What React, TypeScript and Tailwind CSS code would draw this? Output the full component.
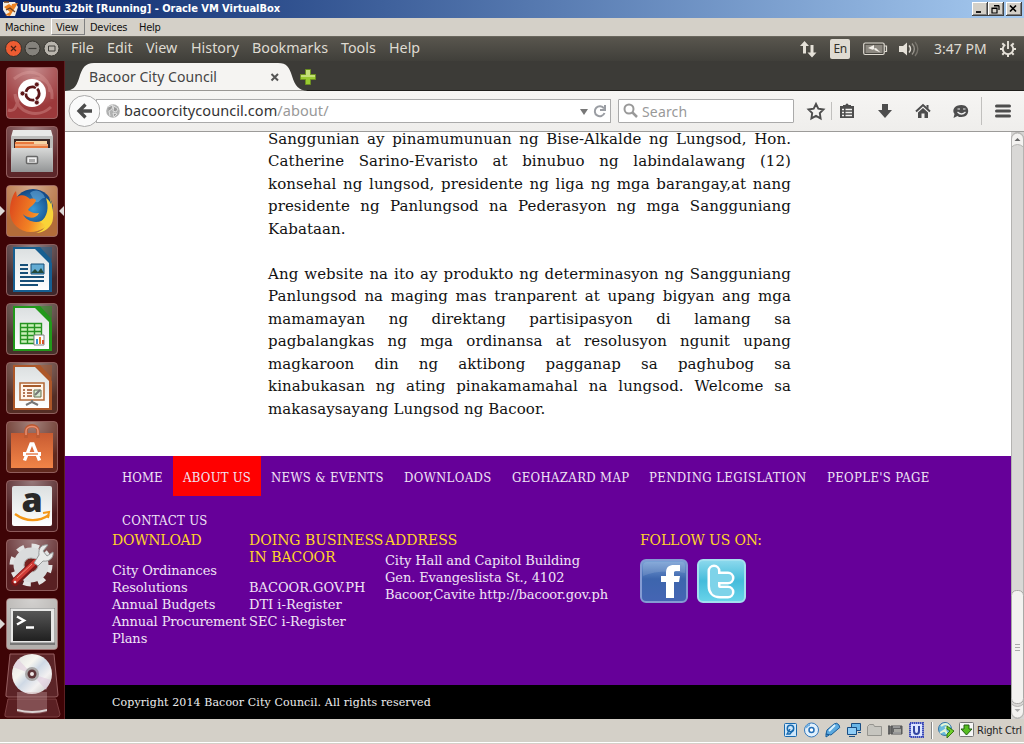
import React from 'react';

const ubuntu = "font-['Noto_Sans','Open_Sans',sans-serif]";
const tahoma = "font-['DejaVu_Sans_Condensed','DejaVu_Sans',sans-serif]";
const serif = "font-['DejaVu_Serif',serif]";

function TitleBar() {
  return (
    <div className={`flex h-[18px] items-center bg-linear-to-r from-[#0a246a] to-[#a6caf0] pl-[2px] pr-[2px] ${tahoma}`}>
      <svg width="17" height="16" viewBox="0 0 17 16">
        <path d="M1 1h12l3 5-3 9H5L1 9z" fill="#f4ede2" />
        <path d="M2 6l5-3 4 3-3 5zM10 3l6-1-5 8-3 5-5-1 5-3z" fill="#ec8122" />
        <path d="M2 1h5M4 9l4-2 5 4" stroke="#74411f" strokeWidth="1.3" fill="none" />
      </svg>
      <span className="ml-[1px] whitespace-nowrap text-[11px] font-bold tracking-[-.04px] text-white">Ubuntu 32bit [Running] - Oracle VM VirtualBox</span>
      <div className="ml-auto flex">
        {['M4 10h5', 'M6 4h5v4M4 6h5v5H4zM6 3.5h5M4 6.5h5', 'M4 3.500l6 6M10 3.500l-6 6'].map((d, i) => (
          <svg key={d} className={i === 2 ? 'ml-[2px]' : ''} width="16" height="14" viewBox="0 0 16 14">
            <path d="M0 0h16v14H0z" fill="#404040" />
            <path d="M0 0h15v13H0z" fill="#fff" />
            <path d="M1 1h14v12H1z" fill="#808080" />
            <path d="M1 1h13v11H1z" fill="#d4d0c8" />
            <path d={d} fill="none" stroke="#000" strokeWidth={i === 1 ? 1.2 : 1.7} />
          </svg>
        ))}
      </div>
    </div>
  );
}

function MachineMenu() {
  return (
    <div className={`flex h-[18px] bg-[#d4d0c8] text-[11px] leading-[20px] tracking-[-.25px] text-[#111] ${tahoma}`}>
      <span className="w-[51px] pl-[5px]">Machine</span>
      <span className="h-[17px] w-[34px] border border-[#808080] border-l-white border-t-white pl-[4px] leading-[18px]">View</span>
      <span className="w-[54px] pl-[5px]">Devices</span>
      <span>Help</span>
    </div>
  );
}

function Panel() {
  return (
    <div className={`flex h-[25px] items-center border-t border-[#69665d] bg-linear-to-b from-[#59564e] to-[#403f3a] pl-[5px] text-[14px] text-[#dfdbd2] ${ubuntu}`}>
      <svg width="56" height="18" viewBox="0 0 56 18">
        <circle cx="8.500" cy="8.500" r="8" fill="#ee5c32" stroke="#35332e" />
        <path d="M6 6l5 5M11 6l-5 5" stroke="#4a2317" strokeWidth="1.200" />
        <circle cx="27.500" cy="8.500" r="7.500" fill="#85827c" stroke="#35332e" />
        <path d="M23.500 8.500h8" stroke="#3c3b37" strokeWidth="1.200" />
        <circle cx="46.500" cy="8.500" r="7.500" fill="#b9b5ad" stroke="#35332e" />
        <path d="M43.500 6h6.500v5h-6.500z" fill="none" stroke="#3c3b37" />
      </svg>
      <div className="-mt-[2px] flex pl-[10px] text-[14.300px]">
        <span className="w-[36px]">File</span>
        <span className="w-[39px]">Edit</span>
        <span className="w-[45px]">View</span>
        <span className="w-[61px]">History</span>
        <span className="w-[89px]">Bookmarks</span>
        <span className="w-[48px]">Tools</span>
        <span>Help</span>
      </div>
      <div className="ml-auto flex items-center pr-[7px]">
        <svg width="18" height="18" viewBox="0 0 18 18" fill="#e5e1d8">
          <path d="M5.500 1L1 6h3v7.500h3V6h3zM13 17.500L8.500 12.500h3V5h3v7.500h3z" />
        </svg>
        <span className="ml-[13px] h-[20px] w-[20px] rounded-[2px] bg-[#dfdbd2] text-center text-[12px] leading-[20px] tracking-[-.5px] text-[#33312c]">En</span>
        <svg className="ml-[13px]" width="25" height="14" viewBox="0 0 25 14">
          <rect x=".7" y="1" width="20.500" height="11.500" rx="1.500" fill="none" stroke="#dfdbd2" strokeWidth="1.200" />
          <path d="M2.500 3h17v8h-17z" fill="#8d8981" />
          <path d="M21.500 4h2v5.500h-2" fill="none" stroke="#dfdbd2" strokeWidth="1.200" />
          <path d="M5 6l6-3v3.500l2-.5 4.500 4.500-6-2.500v-1l-2 .8z" fill="#f3f0e9" />
        </svg>
        <svg className="ml-[10px]" width="21" height="18" viewBox="0 0 21 18" fill="none">
          <path d="M1 6h4l4-3.500v13L5 12H1z" fill="#e5e1d8" />
          <path d="M11 5.500c2 2 2 5 0 7" stroke="#dfdbd2" strokeWidth="1.500" />
          <path d="M14 3.500c3 3.500 3 7.500 0 11" stroke="#96928a" strokeWidth="1.400" />
          <path d="M17 2c4 5 4 9 0 14" stroke="#77746c" strokeWidth="1.300" />
        </svg>
        <span className="-mt-[1px] ml-[15px] w-[53px] whitespace-nowrap">3:47 PM</span>
        <svg className="ml-[12px]" width="18" height="18" viewBox="0 0 18 18" fill="none" stroke="#e5e1d8">
          <path d="M6.300 4.600a5.200 5.200 0 1 0 5.400 0" strokeWidth="1.900" />
          <path d="M9 1v8" strokeWidth="1.900" />
          <path d="M5 5L3.300 3.300M13 5l1.700-1.700M4 9H1M14 9h3M5 13l-1.700 1.700M13 13l1.700 1.700M9 14.500V17" strokeWidth="2" />
        </svg>
      </div>
    </div>
  );
}

function LauncherArt({ name }: { name: string }) {
  switch (name) {
    case 'dash':
      return (
        <g>
          <path d="M2 43C16 48 8 18 27 12c12-3 20 7 19 20M8 12c18-15 36-2 36 13M9 27c2 20 23 25 36 13" stroke="#e3a5a4" strokeOpacity=".35" strokeWidth="3" fill="none" />
          <circle cx="26" cy="26" r="14" fill="#fff" />
          <circle cx="26.500" cy="26.500" r="6.700" fill="none" stroke="#5d1719" strokeWidth="2.800" strokeDasharray="12.500 1.530" strokeDashoffset="5.500" />
          <circle cx="30.800" cy="17.500" r="2.400" fill="#5d1719" stroke="#fff" strokeWidth=".6" /><circle cx="16.500" cy="26.500" r="2.400" fill="#5d1719" stroke="#fff" strokeWidth=".6" /><circle cx="30.800" cy="35.500" r="2.400" fill="#5d1719" stroke="#fff" strokeWidth=".6" />
        </g>
      );
    case 'files':
      return (
        <g>
          <path d="M7 4h38l2 7H5z" fill="#e9e9e7" /><path d="M5 10h42v36H5z" fill="#bdbdbb" />
          <path d="M8 13h36v10H8z" fill="#3b2927" /><path d="M10 15h31v9H10z" fill="#f6d5a4" /><path d="M9 16h19v2h14v4H9z" fill="#e9793d" /><path d="M9 19h33" stroke="#fbe4c4" />
          <path d="M6 22h40l1 24H5z" fill="url(#metal)" />
          <rect x="20.500" y="30.500" width="11" height="7" rx="1" fill="#eee" stroke="#666" strokeWidth="1.500" /><path d="M23 33h6v3h-6z" fill="#ababab" />
        </g>
      );
    case 'firefox':
      return (
        <g>
          <circle cx="27" cy="24" r="20" fill="url(#globe)" /><path d="M24 8c7-6 14 0 15 5-5-1-5 6-10 4z" fill="#73b9e8" opacity=".5" />
          <path d="M5 17c1-5 3-9 5-11l1 6c4-3 9-2 13 2 3-1 5 0 6 1-1 5-6 6-8 10 3 2 6 4 11 3-3 7-13 5-16 1 3 8 16 11 23 4 7-6 6-14 3-21 5 6 5 24-5 31C22 53 5 43 4 28c0-4 0-8 1-11z" fill="url(#fox)" />
          <path d="M34 37c8-5 9-15 6-24 6 4 8 13 7 20 0 9-10 15-17 15 6-2 9-5 9-8z" fill="#f9d438" />
        </g>
      );
    case 'writer':
    case 'calc':
    case 'impress': {
      const c = name === 'writer' ? '#175f91' : name === 'calc' ? '#22991b' : '#ad5729';
      return (
        <g>
          <path d="M7 3h23l16 16v29H7z" fill={c} /><path d="M30 3h16v16z" fill={c} opacity=".45" /><path d="M9 5h20l14 14v27H9z" fill="url(#paper)" />
          <path d="M28 3l17 17v-5L34 3z" fill={c} />
          {name === 'writer' && (
            <g><path d="M14 21h8M14 25h8M14 29h8M14 33h24M14 37h24M14 41h18" stroke="#174f78" strokeWidth="2" /><path d="M25 20h13v10H25z" fill="#63abd3" stroke="#174f78" /><path d="M25 29l4-4 3 3 3-4 3 5z" fill="#244838" /></g>
          )}
          {name === 'calc' && (
            <g><path d="M14 20h22v21H14z" fill="#c9efb7" /><path d="M14.500 20.500h21v20h-21zM21.500 20v21M28.500 20v21M14 24.500h22M14 28.500h22M14 32.500h22M14 36.500h22" stroke="#259321" strokeWidth="1.400" fill="none" /><path d="M28 32h10v10H28z" fill="#fff" stroke="#818281" /><path d="M31 36v5" stroke="#3b92d1" strokeWidth="2" /><path d="M34 34v7" stroke="#e78125" strokeWidth="2" /><path d="M37 37v4" stroke="#d05331" strokeWidth="2" /></g>
          )}
          {name === 'impress' && (
            <g><path d="M14 21h24v17H14z" fill="#fff4e9" stroke="#b36736" strokeWidth="1.500" /><path d="M17 24h18" stroke="#a65b2b" strokeWidth="2" /><path d="M17 28h2M17 31h2M17 34h2M21 28h5M21 31h5M21 34h5" stroke="#9b4c25" strokeWidth="1.500" /><path d="M28 28h7v7h-7z" fill="#d5e8d0" stroke="#65714f" /><path d="M29 33l2-2 3-3M26 38v2l-6 3M26 40l6 3" fill="none" stroke="#777" strokeWidth="2" /></g>
          )}
        </g>
      );
    }
    case 'software':
      return (
        <g>
          <path d="M5 12h42v35H5z" fill="url(#bag)" /><path d="M20 17V10c0-7 12-7 12 0v7" fill="none" stroke="#bc5a33" strokeWidth="3.500" /><path d="M20 14V10c0-6 12-6 12 0v4" fill="none" stroke="#e98f72" strokeWidth="1.500" />
          <path d="M18.500 39.500L25 23h2l6.500 16.500" stroke="#fff" strokeWidth="3.400" fill="none" /><path d="M17 33h18" stroke="#fff" strokeWidth="4" /><path d="M20 33h12" stroke="#e46f36" strokeWidth="1.300" />
        </g>
      );
    case 'amazon':
      return (
        <g>
          <rect x="6" y="6" width="40" height="40" rx="2" fill="url(#paper)" />
          <text x="26" y="32" textAnchor="middle" fontFamily="Open Sans" fontWeight="800" fontSize="34" fill="#292929">a</text>
          <path d="M9 34c11 8 24 8 34 1" stroke="#f49718" strokeWidth="2.400" fill="none" /><path d="M37 33l6-1-1 6" stroke="#f49718" strokeWidth="2" fill="none" />
        </g>
      );
    case 'settings':
      return (
        <g>
          <circle cx="25" cy="26" r="18.500" fill="none" stroke="#e3e4e4" strokeWidth="6" strokeDasharray="7.300 7.230" /><circle cx="25" cy="26" r="12" fill="none" stroke="#dadcdd" strokeWidth="11" />
          <circle cx="25" cy="26" r="7" fill="#752421" stroke="#aaa" />
          <path d="M9 43L29 24" stroke="#7c1719" strokeWidth="8" strokeLinecap="round" /><path d="M9 42L29 23" stroke="#cf3a35" strokeWidth="5" strokeLinecap="round" /><path d="M11 39L26 25" stroke="#f38b7d" />
          <path d="M28 24l5-8c-1-7 3-11 9-10l-5 6 4 5 6-4c1 6-4 10-10 9l-5 5z" fill="#e9eaea" stroke="#96999a" /><circle cx="9" cy="43" r="1.300" fill="#eee" />
        </g>
      );
    case 'terminal':
      return (
        <g>
          <path d="M4 10h45v37H4z" fill="#777" /><path d="M4.500 10.500h44v34h-44z" fill="#e8e8e7" /><path d="M7 13h38v30H7z" fill="url(#term)" />
          <path d="M11 18.500l7 4-7 4M20 29.500h8" fill="none" stroke="#fff" strokeWidth="2.500" />
        </g>
      );
    default:
      return null;
  }
}

function Launcher() {
  const tiles: [string, string][] = [
    ['dash', '#9c393b'], ['files', '#5c2629'], ['firefox', '#b36c3a'], ['writer', '#40272b'], ['calc', '#47312a'],
    ['impress', '#542d25'], ['software', '#61291e'], ['amazon', '#4b191c'], ['settings', '#592023'], ['terminal', '#b3b0ad'],
  ];
  return (
    <div className="flex h-[658px] w-[65px] shrink-0 flex-col gap-[7px] overflow-hidden border-r border-[#5c2023] bg-[#3e0406] pt-[6px]">
      <svg width="0" height="0" className="absolute">
        <defs>
          <linearGradient id="metal" x2="0" y2="1"><stop stopColor="#d8d9d8" /><stop offset="1" stopColor="#939596" /></linearGradient>
          <linearGradient id="paper" x2="0" y2="1"><stop stopColor="#dce0e1" /><stop offset="1" stopColor="#fff" /></linearGradient>
          <linearGradient id="bag" x2="0" y2="1"><stop stopColor="#c85b32" /><stop offset="1" stopColor="#f18447" /></linearGradient>
          <linearGradient id="term" x2="0" y2="1"><stop stopColor="#565656" /><stop offset="1" stopColor="#202020" /></linearGradient>
          <linearGradient id="fox" x2="1" y2=".3"><stop stopColor="#d9411c" /><stop offset=".65" stopColor="#f38424" /><stop offset="1" stopColor="#fbd33b" /></linearGradient>
          <radialGradient id="globe"><stop stopColor="#3899d5" /><stop offset="1" stopColor="#124683" /></radialGradient>
          <radialGradient id="shine" cx=".5" cy="0" r=".8"><stop stopColor="#fff" stopOpacity=".42" /><stop offset="1" stopColor="#fff" stopOpacity="0" /></radialGradient>
          <linearGradient id="disc" x2="1" y2="1"><stop stopColor="#ddd" /><stop offset=".35" stopColor="#f6f6f0" /><stop offset=".5" stopColor="#cfd9e5" /><stop offset=".7" stopColor="#f3f1f1" /><stop offset="1" stopColor="#bcbcbc" /></linearGradient>
        </defs>
      </svg>
      {tiles.map(([name, fill]) => (
        <svg key={name} className="shrink-0 overflow-visible" width="64" height="52" viewBox="0 0 64 52">
          <g transform="translate(6 0)">
            <rect x=".5" y=".5" width="51" height="51" rx="3.500" fill={fill} stroke="#b68684" strokeOpacity=".65" />
            <rect x="1" y="1" width="50" height="50" rx="3" fill="url(#shine)" />
            <LauncherArt name={name} />
          </g>
          {(name === 'firefox' || name === 'terminal') && <path d="M0 21l5 5-5 5z" fill="#ddd8d6" />}
          {name === 'firefox' && <path d="M64 21l-5 5 5 5z" fill="#ddd8d6" />}
        </svg>
      ))}
      <svg className="-mt-[4px] shrink-0" width="64" height="65" viewBox="0 0 64 65">
        <path d="M10 1h44l4 41q0 2-3 2H8q-3 0-2-3z" fill="#5c2427" stroke="#965e60" />
        <path d="M8 46h48l4 15q0 3-3 3H7q-3 0-2-3z" fill="#5b2023" stroke="#7e4042" />
        <circle cx="32" cy="21" r="20" fill="url(#disc)" /><path d="M32 21L18 6l-5 8zM32 21l14 16 5-10z" fill="#dec9dc" opacity=".55" />
        <circle cx="32" cy="21" r="7" fill="#aaa8a8" /><circle cx="32" cy="21" r="4.500" fill="#5c3438" /><circle cx="32" cy="21" r="2" fill="#efe8e8" />
        <path d="M17 39h30v20q-14 4-30 0z" fill="#cba6a8" opacity=".35" /><path d="M17 56q15 4 30 0v2q-14 4-30 0z" fill="#dbd2d2" />
      </svg>
    </div>
  );
}

function TabStrip() {
  return (
    <div className="flex h-[30px] bg-[#3c3b37]">
      <div className="grid h-[30px] w-[258px]">
        <svg className="col-start-1 row-start-1" width="258" height="30" viewBox="0 0 258 30">
          <path d="M0 29.500c8 0 11-3 14-12C17 7 20 2 29 2h184c9 0 11 4 14 13 3 10 7 14.500 15 14.500H0z" fill="#f5f4f2" />
          <path d="M242 29.500h16" stroke="#1f1e1b" />
          <path d="M240.500 8.500h5v5h5v5h-5v5h-5v-5h-5v-5h5z" fill="#9acb32" stroke="#6c8f20" /><path d="M241 9h4v5h5v2h-14v-2h5z" fill="#c4df79" />
        </svg>
        <div className={`col-start-1 row-start-1 flex pl-[24px] text-[14px] leading-[31px] text-[#444] ${ubuntu}`}>
          <span className="w-[181px] tracking-[.06px]">Bacoor City Council</span>
          <svg className="mt-[12px]" width="10" height="9" viewBox="0 0 10 9"><path d="M1.500 1l6.500 6.500M8 1L1.500 7.500" stroke="#555" strokeWidth="2" /></svg>
        </div>
      </div>
      <div className="flex-1 border-b border-[#1f1e1b]" />
    </div>
  );
}

function NavBar() {
  return (
    <div className={`flex h-[41px] items-center border-b border-[#9c9b99] bg-linear-to-b from-[#f6f5f3] to-[#efeeec] text-[14px] ${ubuntu}`}>
      <svg width="35" height="36" viewBox="0 0 35 36" className="z-10 shrink-0">
        <circle cx="19.500" cy="18" r="15.500" fill="#fafafa" stroke="#aaa" />
        <path d="M27 18H16M20.500 11.500L14 18l6.500 6.500" fill="none" stroke="#4b4b4b" strokeWidth="3.300" />
      </svg>
      <div className="-ml-[4px] flex h-[24px] w-[515px] items-center border border-[#aaa] bg-white pl-[9px]">
        <svg width="14" height="14" viewBox="0 0 14 14"><circle cx="7" cy="7" r="6.800" fill="#b0b1b1" /><path d="M2 3l5-2-1 4-3 2 1 5M8 2l4 3-2 3-3-1zM7 9l4 1-3 3z" fill="#999" stroke="#eee" strokeWidth=".8" /></svg>
        <span className="ml-[4px] whitespace-nowrap text-[14.500px] tracking-[.07px] text-[#333]">bacoorcitycouncil.com<span className="text-[#999]">/about/</span></span>
        <svg className="ml-auto mr-[3px]" width="28" height="16" viewBox="0 0 28 16"><path d="M1 6h8l-4 6z" fill="#777" /><path d="M25 5.500A5 5 0 1 0 25.500 10M26 2v5h-5" fill="none" stroke="#9a9da3" strokeWidth="2" /></svg>
      </div>
      <div className="ml-[7px] flex h-[24px] w-[176px] items-center rounded-[1px] border border-[#aaa] bg-white pl-[4px] text-[#999]">
        <svg width="15" height="16" viewBox="0 0 15 16"><circle cx="6" cy="6" r="4.500" stroke="#999" strokeWidth="2" fill="none" /><path d="M9 9l5 5" stroke="#999" strokeWidth="2.500" /></svg>
        <span className="ml-[4px] tracking-[.15px]">Search</span>
      </div>
      <svg width="230" height="40" viewBox="794 91 230 40" fill="none" stroke="#4d4d4d">
        <path d="M816 104l2.300 4.700 5.200.8-3.700 3.700.8 5.200-4.600-2.500-4.600 2.500.8-5.200-3.700-3.700 5.200-.8z" strokeWidth="1.900" />
        <path d="M831.500 102v18M981.500 97v28" stroke="#c1c0be" />
        <path d="M840 106h14v12h-14z" fill="#4d4d4d" stroke="none" /><path d="M843 107v-2h2.500a1.500 1.500 0 0 1 3 0h2.500v2z" fill="#4d4d4d" stroke="none" /><path d="M842 109.500h2M845.500 109.500h6.500M842 112.500h2M845.500 112.500h6.500M842 115.500h2M845.500 115.500h6.500" stroke="#f3f2f0" strokeWidth="1.600" />
        <path d="M882 104h6v6h4l-7 8-7-8h4z" fill="#4d4d4d" stroke="none" />
        <path d="M916 111.500l7-6.500 7 6.500" strokeWidth="2" /><path d="M918 112.500l5-4.500 5 4.500v5.500h-3.500v-4.500h-3v4.500H918zM926.500 105h2v4l-2-2z" fill="#4d4d4d" stroke="none" />
        <path d="M961.500 105c9 0 9 12 0 12-2 0-3 0-4-1l-4 2 1-4c-3-4 0-9 7-9z" fill="#4d4d4d" stroke="none" /><path d="M957.500 109h2.500M963 109h2.500M957.500 112q4 4 8 0" stroke="#eee" strokeWidth="1.200" />
        <path d="M996.500 106h13M996.500 111h13M996.500 116h13" strokeWidth="3" strokeLinecap="round" />
      </svg>
    </div>
  );
}

const lines = [
  'Sanggunian ay pinamumunuan ng Bise-Alkalde ng Lungsod, Hon.',
  'Catherine Sarino-Evaristo at binubuo ng labindalawang (12)',
  'konsehal ng lungsod, presidente ng liga ng mga barangay,at nang',
  'presidente ng Panlungsod na Pederasyon ng mga Sangguniang',
  'Kabataan.',
  '',
  'Ang website na ito ay produkto ng determinasyon ng Sangguniang',
  'Panlungsod na maging mas tranparent at upang bigyan ang mga',
  'mamamayan ng direktang partisipasyon di lamang sa',
  'pagbalangkas ng mga ordinansa at resolusyon ngunit upang',
  'magkaroon din ng aktibong pagganap sa paghubog sa',
  'kinabukasan ng ating pinakamamahal na lungsod. Welcome sa',
  'makasaysayang Lungsod ng Bacoor.',
];

function SocialIcons() {
  return (
    <svg className="mt-[10px]" width="107" height="44" viewBox="0 0 107 44">
      <defs>
        <linearGradient id="fb" x2="0" y2="1"><stop stopColor="#7da5d8" /><stop offset=".45" stopColor="#3d65ad" /><stop offset="1" stopColor="#4565b4" /></linearGradient>
        <linearGradient id="tw" x2="0" y2="1"><stop stopColor="#8dd9ed" /><stop offset=".5" stopColor="#45bcdb" /><stop offset="1" stopColor="#69d4ea" /></linearGradient>
      </defs>
      <rect x="1" y="1" width="46" height="42" rx="5" fill="url(#fb)" stroke="#849bd3" strokeWidth="2" />
      <path d="M3 17V7q0-4 4-4h35q3 0 3 4v7Q20 10 3 17z" fill="#fff" opacity=".12" />
      <path d="M26 39V23h-5v-6h5v-3c0-6 3-8 8-8h6v6h-4c-2 0-2 1-2 2v3h6l-1 6h-5v16z" fill="#fff" />
      <rect x="58" y="1" width="47" height="42" rx="5" fill="url(#tw)" stroke="#a2e0ef" strokeWidth="2" />
      <path d="M74 12v15q0 6 6 6h8M75 19h13" fill="none" stroke="#fff" strokeWidth="13" strokeLinecap="round" />
      <path d="M74 12v15q0 6 6 6h8M75 19h13" fill="none" stroke="#7ed3e9" strokeWidth="8" strokeLinecap="round" />
    </svg>
  );
}

function Page() {
  return (
    <div className={`flex h-[587px] w-[946px] flex-col overflow-hidden bg-white ${serif}`}>
      <div className="ml-[203px] h-[324px] w-[523px] shrink-0 text-[15px] tracking-[.07px] text-[#111]">
        <div className="-mt-[4.250px]">
          {lines.map((l, i) => (
            <div key={i} className={`h-[22.500px] whitespace-nowrap leading-[22.500px] ${i === 4 || i === 12 ? '' : '[text-align-last:justify]'}`}>{l}</div>
          ))}
        </div>
      </div>
      <div className="h-[229px] shrink-0 bg-[#660099] pl-[47px] text-[#f0e5f5]">
        <div className="flex h-[40px] whitespace-nowrap font-['DejaVu_Serif_Condensed','DejaVu_Serif',serif] text-[13px] leading-[43px] tracking-[.35px]">
          <span className="w-[61px] pl-[10px] tracking-[.1px]">HOME</span>
          <span className="w-[88px] bg-[#ff0000] pl-[10px] tracking-[.25px]">ABOUT US</span>
          <span className="w-[133px] pl-[10px]">NEWS &amp; EVENTS</span>
          <span className="w-[108px] pl-[10px]">DOWNLOADS</span>
          <span className="w-[137px] pl-[10px]">GEOHAZARD MAP</span>
          <span className="w-[178px] pl-[10px] tracking-[.4px]">PENDING LEGISLATION</span>
          <span className="w-[122px] pl-[10px]">PEOPLE'S PAGE</span>
        </div>
        <div className="mt-[14px] h-[21px] pl-[10px] font-['DejaVu_Serif_Condensed','DejaVu_Serif',serif] text-[13px] leading-[21px] tracking-[.3px]">CONTACT US</div>
        <div className="flex whitespace-nowrap pt-[1px] text-[13px] leading-[17px] tracking-[-.1px]">
          <div className="w-[137px]">
            <h3 className="text-[14px] tracking-[-.25px] text-[#ffd42a]">DOWNLOAD</h3>
            <div className="mt-[13px]">City Ordinances<br />Resolutions<br />Annual Budgets<br /><span className="tracking-[-.13px]">Annual Procurement</span><br />Plans</div>
          </div>
          <div className="w-[136px]">
            <h3 className="text-[14px] tracking-[-.03px] text-[#ffd42a]">DOING BUSINESS<br />IN BACOOR</h3>
            <div className="mt-[13px] tracking-[0px]">BACOOR.GOV.PH<br />DTI i-Register<br />SEC i-Register</div>
          </div>
          <div className="w-[255px]">
            <h3 className="text-[14px] tracking-[0px] text-[#ffd42a]">ADDRESS</h3>
            <div className="mt-[3px]">City Hall and Capitol Building<br />Gen. Evangeslista St., 4102<br />Bacoor,Cavite http://bacoor.gov.ph</div>
          </div>
          <div>
            <h3 className="text-[14px] tracking-[-.15px] text-[#ffd42a]">FOLLOW US ON:</h3>
            <SocialIcons />
          </div>
        </div>
      </div>
      <div className="h-[34px] bg-black pl-[47px] text-[11px] leading-[36px] tracking-[.11px] text-[#eee]">Copyright 2014 Bacoor City Council. All rights reserved</div>
    </div>
  );
}

function ScrollBar() {
  return (
    <svg width="13" height="587" viewBox="0 0 13 587">
      <path d="M0 0h13v587H0z" fill="#d5d4d2" />
      <rect x=".5" y=".5" width="12" height="586" rx="6" fill="#d9d8d6" stroke="#b4b3b1" />
      <path d="M.5 15V7a6 6 0 0 1 12 0v8q-6-5-12 0zM.5 572v8a6 6 0 0 0 12 0v-8q-6 5-12 0z" fill="#f3f2f0" stroke="#b4b3b1" />
      <path d="M3.500 9l3-3 3 3z" fill="#666" /><path d="M3.500 577l3 3 3-3z" fill="#aaa" />
      <rect x=".5" y="458.500" width="12" height="113" rx="5" fill="#f3f2f0" stroke="#aaa9a7" />
      <path d="M4 512.500h5M4 515.500h5M4 518.500h5" stroke="#aaa" />
    </svg>
  );
}

function StatusBar() {
  return (
    <div className={`flex h-[24px] border-b border-white bg-[#d4d0c8] pl-[783px] text-[11px] leading-[23px] tracking-[-.2px] text-[#222] ${tahoma}`}>
      <svg width="193" height="23" viewBox="783 0 193 23" fill="none">
        <rect x="784.500" y="4.500" width="12" height="13" rx="1" fill="#cfe7fa" stroke="#1769ae" /><circle cx="790.500" cy="9.500" r="3.200" stroke="#1769ae" strokeWidth="1.500" /><path d="M790 10l-3 5h3l3-4" stroke="#1769ae" strokeWidth="1.300" />
        <circle cx="811.500" cy="11" r="7" fill="#e2f0fb" stroke="#3679bc" /><circle cx="811.500" cy="11" r="2.500" fill="#fff" stroke="#2570b8" strokeWidth="1.500" /><path d="M806 9q1-3 4-3" stroke="#70aee0" strokeWidth="2" />
        <path d="M826 15l1-4 7-6q3-2 5 1t-1 4l-7 6zM826 15l3 1-3 2z" fill="#5ba9df" stroke="#185d9a" /><path d="M829 12l6-6" stroke="#d9f1ff" strokeWidth="2" />
        <path d="M851.500 4.500h9v7h-9z" fill="#69b6e7" stroke="#194d83" /><path d="M847.500 8.500h9v7h-9z" fill="#8fcdf7" stroke="#194d83" /><path d="M849 17.500h6M858 13.500h3" stroke="#194d83" />
        <path d="M867.500 7.500l2-2h4l1 2h7v9h-14z" fill="#c6c5bf" stroke="#95948f" />
        <path d="M888 7h2v8h-2M891 7h11v8h-11z" fill="#666" stroke="#555" /><path d="M893 8h7M893 14h8" stroke="#ccc" /><path d="M894 10h7v3h-7z" fill="#a8a8a3" />
        <path d="M910 4h13v14h-13z" fill="#dce5ff" stroke="#3949ba" strokeWidth="2" strokeDasharray="1.500 .5" /><path d="M914 7v5q0 3 2.500 3t2.500-3V7" stroke="#3346a2" strokeWidth="2" />
        <path d="M931.500 3v17" stroke="#888" /><path d="M932.500 3v17" stroke="#fff" />
        <circle cx="945" cy="10" r="6.500" fill="#6cbcdd" stroke="#3675a4" /><path d="M941 7q5-4 8 0l-4 2M940 14l5-3 2 4" stroke="#e4f5d5" strokeWidth="2" /><path d="M947 7l7 5-7 7v-4l3-3-3-2z" fill="#6fcf29" stroke="#357614" />
        <rect x="959.500" y="3.500" width="14" height="14" rx="1" fill="#f7f7f7" stroke="#777" /><path d="M964 6h5v4h3l-5.500 6-5.500-6h3z" fill="#56bd20" stroke="#235f12" />
      </svg>
      <span className="ml-[1px] whitespace-nowrap">Right Ctrl</span>
    </div>
  );
}

export default function App() {
  return (
    <div className="h-[744px] w-[1024px] overflow-hidden bg-[#d4d0c8]">
      <TitleBar />
      <MachineMenu />
      <Panel />
      <div className="flex h-[658px]">
        <Launcher />
        <main className="w-[959px]">
          <TabStrip />
          <NavBar />
          <div className="flex"><Page /><ScrollBar /></div>
        </main>
      </div>
      <StatusBar />
    </div>
  );
}
